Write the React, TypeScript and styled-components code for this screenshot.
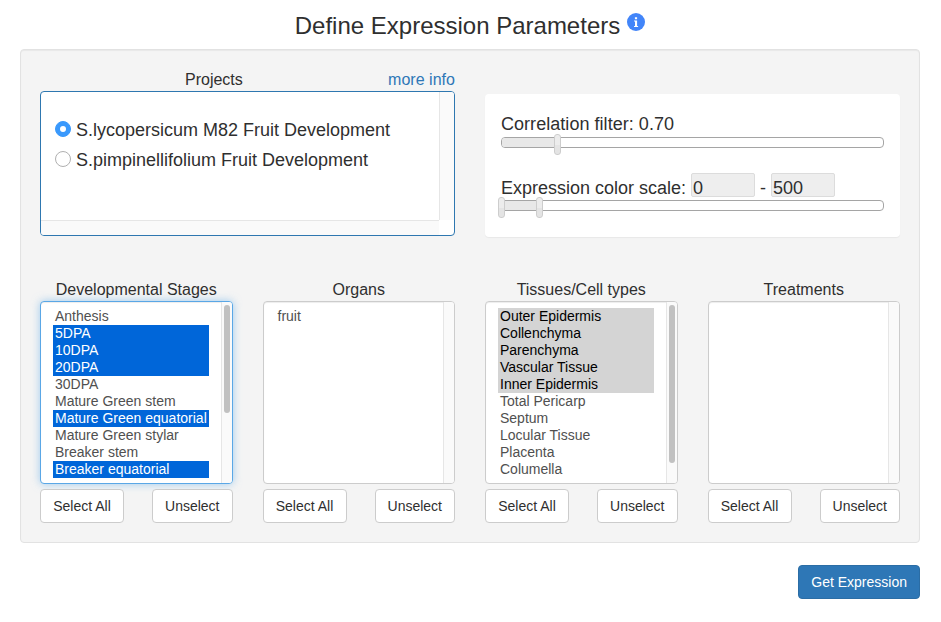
import React from 'react';
import styled, { createGlobalStyle, css } from 'styled-components';

const GlobalStyle = createGlobalStyle`
  *, *::before, *::after { box-sizing: border-box; }
  body {
    margin: 0;
    background: #fff;
    color: #2f2f2f;
    font-family: "Liberation Sans", Arial, Helvetica, sans-serif;
    font-size: 14px;
    line-height: 20px;
  }
`;

const Page = styled.main`
  width: 941px;
  height: 622px;
  padding: 10px 21px 0 20px;
  overflow: hidden;
`;

const TitleRow = styled.header`
  display: flex;
  justify-content: center;
  height: 39px;
  gap: 7px;
`;

const Title = styled.h3`
  margin: 0;
  font-size: 24px;
  font-weight: 400;
  line-height: 32px;
  white-space: nowrap;
`;

const InfoIcon = styled.svg`
  width: 18px;
  height: 18px;
  margin-top: 3px;
`;

const Well = styled.section`
  height: 494px;
  padding: 20px 19px 19px;
  border: 1px solid #e2e2e2;
  border-radius: 4px;
  background: #f4f4f4;
  box-shadow: inset 0 1px 1px rgba(0, 0, 0, 0.05);
`;

const TopRow = styled.div`
  display: grid;
  grid-template-columns: 415px 415px;
  gap: 30px;
  height: 210px;
`;

const ProjectsHead = styled.div`
  display: grid;
  grid-template-columns: 145px 1fr auto;
  height: 21px;
  font-size: 16px;
  line-height: 19px;
`;

const ProjectsLabel = styled.span`
  grid-column: 2;
`;

const MoreInfo = styled.a`
  color: #2e77b7;
  letter-spacing: 0.03px;
`;

const ProjectsBox = styled.div`
  display: grid;
  grid-template: 1fr 15px / 1fr 15px;
  height: 145px;
  border: 1px solid #2e77b0;
  border-radius: 4px;
  background: #fff;
  overflow: hidden;
`;

const ProjectList = styled.div`
  padding: 23px 0 0 14px;
`;

const VerticalGutter = styled.div`
  border-left: 1px solid #e6e6e6;
  background: #fafafa;
`;

const HorizontalGutter = styled.div`
  border-top: 1px solid #e6e6e6;
  background: #fafafa;
`;

const ProjectOption = styled.label`
  display: flex;
  align-items: center;
  gap: 5px;
  height: 30px;
  font-size: 18px;
  white-space: nowrap;
`;

const Radio = styled.span<{ $on?: boolean }>`
  display: grid;
  place-items: center;
  width: 16px;
  height: 16px;
  margin-top: -2px;
  border-radius: 50%;
  border: 1px solid ${(p) => (p.$on ? '#3a99fc' : '#b0b0b0')};
  background: ${(p) => (p.$on ? '#3a99fc' : '#fff')};
  &::after {
    content: '';
    width: 6px;
    height: 6px;
    border-radius: 50%;
    background: #fff;
  }
`;

const FilterCard = styled.div`
  height: 143px;
  margin-top: 24px;
  padding: 20px 16px 0;
  border-radius: 4px;
  background: #fff;
  box-shadow: 0 1px 1px rgba(0, 0, 0, 0.05);
`;

const FilterLabel = styled.div`
  height: 23px;
  font-size: 18px;
  line-height: 20px;
  letter-spacing: 0.04px;
`;

const ScaleRow = styled.div`
  display: flex;
  height: 27px;
  margin-top: 25px;
  padding-top: 4px;
  font-size: 18px;
  line-height: 21px;
`;

const ScaleLabel = styled.span`
  width: 190px;
  padding-top: 1px;
  white-space: nowrap;
`;

const ScaleValue = styled.span`
  width: 64px;
  height: 24px;
  margin-top: -4px;
  padding: 4px 1px 0;
  border: 1px solid #dcdcdc;
  border-radius: 2px;
  background: #eee;
`;

const Dash = styled.span`
  width: 16px;
  padding-top: 1px;
  text-align: center;
`;

const Track = styled.div`
  position: relative;
  height: 11px;
  border: 1px solid #a5a5a5;
  border-radius: 4px;
  background: #fff;
`;

const Range = styled.div<{ $width: number }>`
  width: ${(p) => p.$width}px;
  height: 9px;
  border-radius: 3px 0 0 3px;
  background: #e8e8e8;
`;

const Handle = styled.span<{ $left: number }>`
  position: absolute;
  top: -4px;
  left: ${(p) => p.$left}px;
  width: 7px;
  height: 21px;
  border: 1px solid #cdcdcd;
  border-radius: 3px;
  background: linear-gradient(#ececec 0 50%, #e4e4e4 50%);
`;

const Columns = styled.div`
  display: grid;
  grid-template-columns: repeat(4, 192.5px);
  gap: 30px;
`;

const ColumnTitle = styled.div`
  height: 21px;
  font-size: 16px;
  line-height: 19px;
  text-align: center;
  white-space: nowrap;
`;

const ListBox = styled.div<{ $focused?: boolean }>`
  display: flex;
  justify-content: space-between;
  height: 183px;
  border: 1px solid #ccc;
  border-radius: 4px;
  background: #fff;
  box-shadow: inset 0 1px 1px rgba(0, 0, 0, 0.075);
  ${(p) =>
    p.$focused &&
    css`
      border-color: #5aa7e6;
      box-shadow: inset 0 1px 1px rgba(0, 0, 0, 0.075), 0 0 8px rgba(102, 175, 233, 0.6);
    `}
`;

const Options = styled.div`
  width: 168px;
  padding: 6px 0 0 12px;
`;

type Tone = 'plain' | 'active' | 'muted';

const tones = {
  plain: css`color: #505050;`,
  active: css`color: #fff; background: #0066d9;`,
  muted: css`color: #000; background: #d4d4d4;`,
};

const OptionRow = styled.div<{ $tone: Tone }>`
  height: 17px;
  padding-left: 2px;
  line-height: 17px;
  white-space: nowrap;
  ${(p) => tones[p.$tone]}
`;

const Scrollbar = styled.div`
  width: 11px;
  padding: 3px 2px 0 1px;
  border-left: 1px solid #e6e6e6;
  border-radius: 0 3px 3px 0;
  background: #fafafa;
`;

const Thumb = styled.div<{ $height: number }>`
  width: 6px;
  margin-left: 1px;
  height: ${(p) => p.$height}px;
  border-radius: 3px;
  background: #c1c1c1;
`;

const Actions = styled.div`
  display: flex;
  justify-content: space-between;
  margin-top: 5px;
`;

const Button = styled.button<{ $primary?: boolean }>`
  height: 34px;
  padding: 0 12px;
  border: 1px solid ${(p) => (p.$primary ? '#2b6da5' : '#ccc')};
  border-radius: 4px;
  background: ${(p) => (p.$primary ? '#2e77b6' : '#fff')};
  color: ${(p) => (p.$primary ? '#fff' : '#2f2f2f')};
  font: 14px/20px "Liberation Sans", Arial, sans-serif;
  white-space: nowrap;
`;

const SelectAllButton = styled(Button)`
  width: 84px;
`;

const Footer = styled.footer`
  display: flex;
  justify-content: flex-end;
  margin-top: 22px;
`;

interface ListColumn {
  title: string;
  selectedTone: Tone;
  options: string[];
  selected: string[];
  thumb?: number;
  focused?: boolean;
}

const columns: ListColumn[] = [
  {
    title: 'Developmental Stages',
    selectedTone: 'active',
    focused: true,
    thumb: 108,
    options: [
      'Anthesis', '5DPA', '10DPA', '20DPA', '30DPA', 'Mature Green stem',
      'Mature Green equatorial', 'Mature Green stylar', 'Breaker stem', 'Breaker equatorial',
    ],
    selected: ['5DPA', '10DPA', '20DPA', 'Mature Green equatorial', 'Breaker equatorial'],
  },
  { title: 'Organs', selectedTone: 'muted', options: ['fruit'], selected: [] },
  {
    title: 'Tissues/Cell types',
    selectedTone: 'muted',
    thumb: 158,
    options: [
      'Outer Epidermis', 'Collenchyma', 'Parenchyma', 'Vascular Tissue', 'Inner Epidermis',
      'Total Pericarp', 'Septum', 'Locular Tissue', 'Placenta', 'Columella',
    ],
    selected: ['Outer Epidermis', 'Collenchyma', 'Parenchyma', 'Vascular Tissue', 'Inner Epidermis'],
  },
  { title: 'Treatments', selectedTone: 'muted', options: [], selected: [] },
];

export default function App() {
  return (
    <Page>
      <GlobalStyle />
      <TitleRow>
        <Title>Define Expression Parameters</Title>
        <InfoIcon viewBox="0 0 18 18" aria-label="Information">
          <circle cx="9" cy="9" r="9" fill="#4285f9" />
          <path d="M7.9 4.2h2.2v2H7.9zM7 7.6h3.1v5.5h1v1H7v-1h1V8.6H7z" fill="#fff" />
        </InfoIcon>
      </TitleRow>
      <Well>
        <TopRow>
          <div>
            <ProjectsHead>
              <ProjectsLabel>Projects</ProjectsLabel>
              <MoreInfo>more info</MoreInfo>
            </ProjectsHead>
            <ProjectsBox>
              <ProjectList>
                <ProjectOption>
                  <Radio $on />
                  <span>S.lycopersicum M82 Fruit Development</span>
                </ProjectOption>
                <ProjectOption>
                  <Radio />
                  <span>S.pimpinellifolium Fruit Development</span>
                </ProjectOption>
              </ProjectList>
              <VerticalGutter />
              <HorizontalGutter />
            </ProjectsBox>
          </div>
          <FilterCard>
            <FilterLabel>Correlation filter: 0.70</FilterLabel>
            <Track>
              <Range $width={55} />
              <Handle $left={52} />
            </Track>
            <ScaleRow>
              <ScaleLabel>Expression color scale:</ScaleLabel>
              <ScaleValue>0</ScaleValue>
              <Dash>-</Dash>
              <ScaleValue>500</ScaleValue>
            </ScaleRow>
            <Track>
              <Range $width={37} />
              <Handle $left={-4} />
              <Handle $left={34} />
            </Track>
          </FilterCard>
        </TopRow>
        <Columns>
          {columns.map((col) => (
            <div key={col.title}>
              <ColumnTitle>{col.title}</ColumnTitle>
              <ListBox $focused={col.focused}>
                <Options>
                  {col.options.map((name) => (
                    <OptionRow
                      key={name}
                      $tone={col.selected.includes(name) ? col.selectedTone : 'plain'}
                    >
                      {name}
                    </OptionRow>
                  ))}
                </Options>
                <Scrollbar>{col.thumb && <Thumb $height={col.thumb} />}</Scrollbar>
              </ListBox>
              <Actions>
                <SelectAllButton>Select All</SelectAllButton>
                <Button>Unselect</Button>
              </Actions>
            </div>
          ))}
        </Columns>
      </Well>
      <Footer>
        <Button $primary>Get Expression</Button>
      </Footer>
    </Page>
  );
}
